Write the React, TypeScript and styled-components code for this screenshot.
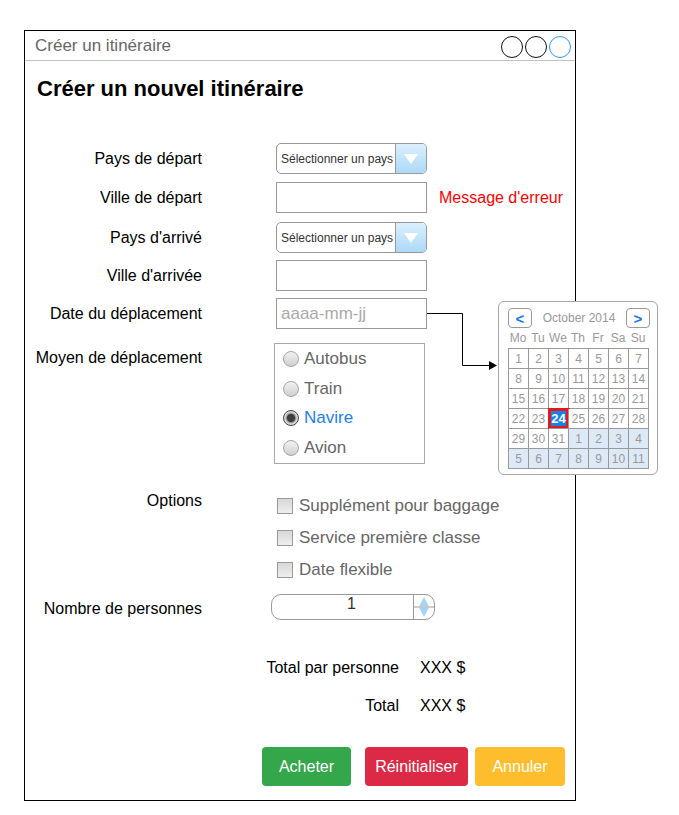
import React from "react";
import styled, { createGlobalStyle } from "styled-components";

const GlobalStyle = createGlobalStyle`
  body {
    margin: 0;
    background: #fff;
    font-family: "Liberation Sans", Arial, sans-serif;
  }
  * { box-sizing: border-box; }
`;

const Page = styled.div`
  padding: 30px 0 0 24px;
`;

const Window = styled.div`
  width: 552px;
  height: 771px;
  border: 1px solid #000;
  display: flex;
  flex-direction: column;
  position: relative;
  background: #fff;
`;

const TitleBar = styled.div`
  height: 30px;
  border-bottom: 1px solid #c2c2c2;
  display: flex;
  align-items: center;
  justify-content: space-between;
  padding: 0 4px 0 10px;
`;

const WindowTitle = styled.span`
  font-size: 17px;
  color: #666;
  margin-top: 1px;
`;

const Controls = styled.div`
  display: flex;
  gap: 2px;
  margin-top: 2px;
`;

const Dot = styled.span<{ $active?: boolean }>`
  width: 22px;
  height: 22px;
  border-radius: 50%;
  border: 1.5px solid ${(p) => (p.$active ? "#2b9af3" : "#111")};
`;

const Heading = styled.h1`
  margin: 15px 0 0 12px;
  font-size: 22px;
  line-height: 26px;
  font-weight: bold;
  color: #000;
`;

const Row = styled.div<{ $mt: number; $align?: string }>`
  display: grid;
  grid-template-columns: 177px 1fr;
  column-gap: 74px;
  margin-top: ${(p) => p.$mt}px;
  align-items: ${(p) => p.$align ?? "center"};
`;

const Label = styled.label<{ $pt?: number }>`
  text-align: right;
  font-size: 16px;
  line-height: 18px;
  color: #000;
  padding-top: ${(p) => p.$pt ?? 0}px;
`;

const Field = styled.div`
  display: flex;
  align-items: center;
  gap: 12px;
  position: relative;
`;

const Select = styled.div`
  width: 151px;
  height: 31px;
  border: 1px solid #999;
  border-radius: 5px;
  display: flex;
  overflow: hidden;
`;

const SelectText = styled.span`
  flex: 1;
  font-size: 12px;
  color: #333;
  padding-left: 4px;
  display: flex;
  align-items: center;
`;

const SelectButton = styled.span`
  width: 31px;
  border-left: 1px solid #999;
  background: linear-gradient(#dbeffd, #acd9fa);
  display: flex;
  align-items: center;
  justify-content: center;
`;

const TextInput = styled.div`
  width: 151px;
  height: 31px;
  border: 1px solid #999;
  font-size: 17px;
  color: #aaa;
  padding-left: 4px;
  display: flex;
  align-items: center;
`;

const ErrorText = styled.span`
  color: #ff0000;
  font-size: 16px;
`;

const RadioBox = styled.div`
  width: 151px;
  height: 121px;
  border: 1px solid #aaa;
  margin-left: -2px;
  padding: 0 0 0 8px;
  display: flex;
  flex-direction: column;
`;

const Choice = styled.div<{ $h: number; $gap: number; $color?: string }>`
  height: ${(p) => p.$h}px;
  display: flex;
  align-items: center;
  gap: ${(p) => p.$gap}px;
  font-size: 17px;
  color: ${(p) => p.$color ?? "#666"};
`;

const RadioDot = styled.span<{ $checked?: boolean }>`
  width: 16px;
  height: 16px;
  border-radius: 50%;
  border: 1px solid ${(p) => (p.$checked ? "#444" : "#a5a5a5")};
  background: ${(p) =>
    p.$checked
      ? "radial-gradient(circle, #3d3d3d 0 3.6px, #9a9a9a 4.6px, #d8d8d8 6px)"
      : "linear-gradient(#f2f2f2, #cfcfcf)"};
  flex: none;
`;

const CheckList = styled.div`
  display: flex;
  flex-direction: column;
  margin: 1px 0 0 1px;
`;

const CheckBox = styled.span`
  width: 16px;
  height: 16px;
  border: 1px solid #999;
  background: linear-gradient(#d8d8d8, #eeeeee);
  flex: none;
`;

const Spinner = styled.div`
  width: 164px;
  height: 26px;
  margin-left: -5px;
  border: 1px solid #999;
  border-radius: 10px;
  display: flex;
  overflow: hidden;
`;

const SpinnerValue = styled.span`
  flex: 1;
  font-size: 16px;
  color: #333;
  text-align: center;
  padding-left: 18px;
  line-height: 16px;
  padding-top: 1px;
`;

const SpinnerButton = styled.span`
  width: 21px;
  border-left: 1px solid #999;
  display: flex;
  align-items: center;
  justify-content: center;
`;

const Totals = styled.div<{ $mt: number }>`
  display: grid;
  grid-template-columns: 374px auto;
  column-gap: 21px;
  row-gap: 20px;
  margin-top: ${(p) => p.$mt}px;
  font-size: 16px;
  line-height: 18px;
  color: #000;
`;

const TotalLabel = styled.span`
  text-align: right;
`;

const Actions = styled.div`
  margin-top: 32px;
  display: flex;
  justify-content: flex-end;
  padding-right: 10px;
`;

const Button = styled.button<{ $bg: string; $w: number; $ml: number }>`
  width: ${(p) => p.$w}px;
  height: 39px;
  margin-left: ${(p) => p.$ml}px;
  border: none;
  border-radius: 4px;
  background: ${(p) => p.$bg};
  color: #fff;
  font-family: "Liberation Sans", Arial, sans-serif;
  font-size: 16px;
  padding: 0;
`;

const Connector = styled.svg`
  position: absolute;
  left: 151px;
  top: 13px;
  overflow: visible;
`;

const Calendar = styled.div`
  position: absolute;
  left: 222px;
  top: 3px;
  z-index: 2;
  width: 160px;
  height: 174px;
  border: 1px solid #a8a8a8;
  border-radius: 6px;
  background: #fff;
  padding: 6px 0 0 9px;
`;

const CalHeader = styled.div`
  width: 142px;
  display: flex;
  align-items: center;
  justify-content: space-between;
`;

const NavButton = styled.span`
  width: 24px;
  height: 20px;
  border: 1px solid #999;
  border-radius: 4px;
  display: flex;
  align-items: center;
  justify-content: center;
  color: #1677f2;
  font-weight: bold;
  font-size: 15px;
  line-height: 1;
`;

const MonthName = styled.span`
  font-size: 12px;
  color: #999;
`;

const WeekDays = styled.div`
  display: grid;
  grid-template-columns: repeat(7, 20px);
  margin-top: 2px;
  width: 141px;
  font-size: 12px;
  line-height: 17px;
  color: #999;
  text-align: center;
`;

const DayGrid = styled.div`
  display: grid;
  grid-template-columns: repeat(7, 20px);
  grid-auto-rows: 20px;
  width: 141px;
  border-top: 1px solid #999;
  border-left: 1px solid #999;
  margin-top: 1px;
`;

const Day = styled.span<{ $other?: boolean; $selected?: boolean }>`
  border-right: 1px solid #999;
  border-bottom: 1px solid #999;
  display: flex;
  align-items: center;
  justify-content: center;
  font-size: ${(p) => (p.$selected ? 13 : 12)}px;
  position: relative;
  color: ${(p) => (p.$selected ? "#fff" : "#999")};
  font-weight: ${(p) => (p.$selected ? "bold" : "normal")};
  background: ${(p) => (p.$selected ? "#1482f0" : p.$other ? "#dde9f7" : "#fff")};
  box-shadow: ${(p) => (p.$selected ? "0 0 0 2px #e21a1a inset" : "none")};
  ${(p) => (p.$selected ? "outline: 1px solid #e21a1a;" : "")}
`;

const weekDays = ["Mo", "Tu", "We", "Th", "Fr", "Sa", "Su"];
const days: { n: number; other?: boolean }[] = [
  ...Array.from({ length: 31 }, (_, i) => ({ n: i + 1 })),
  ...Array.from({ length: 11 }, (_, i) => ({ n: i + 1, other: true })),
];

const Arrow = () => (
  <svg width="14" height="10" viewBox="0 0 14 10">
    <polygon points="0,0 14,0 7,10" fill="#fff" />
  </svg>
);

const CountrySelect = () => (
  <Select>
    <SelectText>Sélectionner un pays</SelectText>
    <SelectButton>
      <Arrow />
    </SelectButton>
  </Select>
);

export default function App() {
  return (
    <Page>
      <GlobalStyle />
      <Window>
        <TitleBar>
          <WindowTitle>Créer un itinéraire</WindowTitle>
          <Controls>
            <Dot />
            <Dot />
            <Dot $active />
          </Controls>
        </TitleBar>
        <Heading>Créer un nouvel itinéraire</Heading>

        <Row $mt={41}>
          <Label>Pays de départ</Label>
          <Field>
            <CountrySelect />
          </Field>
        </Row>
        <Row $mt={8}>
          <Label>Ville de départ</Label>
          <Field>
            <TextInput />
            <ErrorText>Message d'erreur</ErrorText>
          </Field>
        </Row>
        <Row $mt={9}>
          <Label>Pays d'arrivé</Label>
          <Field>
            <CountrySelect />
          </Field>
        </Row>
        <Row $mt={7}>
          <Label>Ville d'arrivée</Label>
          <Field>
            <TextInput />
          </Field>
        </Row>
        <Row $mt={7}>
          <Label>Date du déplacement</Label>
          <Field>
            <TextInput>aaaa-mm-jj</TextInput>
            <Connector width="72" height="60">
              <path d="M0 2.5 H35.5 V54.5 H63" fill="none" stroke="#000" strokeWidth="1" />
              <polygon points="62,50 70,54.5 62,59" fill="#000" />
            </Connector>
            <Calendar>
              <CalHeader>
                <NavButton>&lt;</NavButton>
                <MonthName>October 2014</MonthName>
                <NavButton>&gt;</NavButton>
              </CalHeader>
              <WeekDays>
                {weekDays.map((d) => (
                  <span key={d}>{d}</span>
                ))}
              </WeekDays>
              <DayGrid>
                {days.map((d, i) => (
                  <Day key={i} $other={d.other} $selected={!d.other && d.n === 24}>
                    {d.n}
                  </Day>
                ))}
              </DayGrid>
            </Calendar>
          </Field>
        </Row>
        <Row $mt={14} $align="start">
          <Label $pt={6}>Moyen de déplacement</Label>
          <RadioBox>
            <Choice $h={30} $gap={5}>
              <RadioDot />
              Autobus
            </Choice>
            <Choice $h={30} $gap={5}>
              <RadioDot />
              Train
            </Choice>
            <Choice $h={30} $gap={5} $color="#1b7ff0">
              <RadioDot $checked />
              Navire
            </Choice>
            <Choice $h={30} $gap={5}>
              <RadioDot />
              Avion
            </Choice>
          </RadioBox>
        </Row>
        <Row $mt={25} $align="start">
          <Label $pt={3}>Options</Label>
          <CheckList>
            <Choice $h={32} $gap={6}>
              <CheckBox />
              Supplément pour baggage
            </Choice>
            <Choice $h={32} $gap={6}>
              <CheckBox />
              Service première classe
            </Choice>
            <Choice $h={32} $gap={6}>
              <CheckBox />
              Date flexible
            </Choice>
          </CheckList>
        </Row>
        <Row $mt={8} $align="start">
          <Label $pt={6}>Nombre de personnes</Label>
          <Spinner>
            <SpinnerValue>1</SpinnerValue>
            <SpinnerButton>
              <svg width="20" height="24" viewBox="0 0 20 24">
                <polygon points="10,2 15,11.5 5,11.5" fill="#a3d4f7" />
                <polygon points="5,12.5 15,12.5 10,22" fill="#a3d4f7" />
                <line x1="0" y1="12" x2="20" y2="12" stroke="#bcbcbc" strokeWidth="1.5" />
              </svg>
            </SpinnerButton>
          </Spinner>
        </Row>

        <Totals $mt={39}>
          <TotalLabel>Total par personne</TotalLabel>
          <span>XXX $</span>
          <TotalLabel>Total</TotalLabel>
          <span>XXX $</span>
        </Totals>

        <Actions>
          <Button $bg="#34a74b" $w={89} $ml={0}>
            Acheter
          </Button>
          <Button $bg="#dc2945" $w={103} $ml={14}>
            Réinitialiser
          </Button>
          <Button $bg="#fdbd2c" $w={90} $ml={7}>
            Annuler
          </Button>
        </Actions>
      </Window>
    </Page>
  );
}
